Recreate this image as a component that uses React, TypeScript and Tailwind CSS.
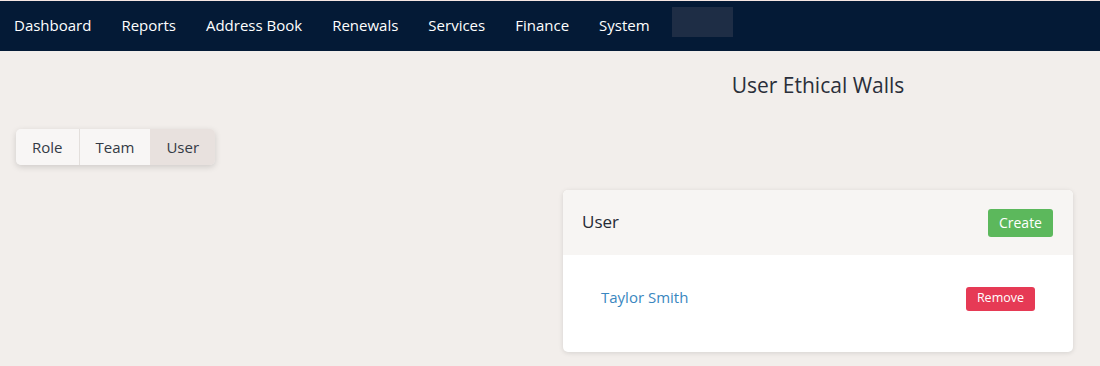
import React from "react";

const navItems = ["Dashboard", "Reports", "Address Book", "Renewals", "Services", "Finance", "System"];

const Navbar = () => (
  <div className="border-t border-[#f6e7e3] bg-[#041a36] h-[51px] flex items-center pl-[14px] pb-[2px]">
    {navItems.map((item) => (
      <a key={item} className="text-white text-[15px] mr-[30px] leading-none cursor-pointer">
        {item}
      </a>
    ))}
    <div className="w-[61px] h-[30px] bg-[#1e2d45] -ml-[8px] -mt-[6px]" />
  </div>
);

const Tabs = () => {
  const tabs = ["Role", "Team", "User"];
  const active = "User";
  return (
    <div className="inline-flex rounded-[5px] shadow-[0_2px_6px_rgba(0,0,0,0.15)] overflow-hidden">
      {tabs.map((t, i) => (
        <div
          key={t}
          className={
            "h-[36px] flex items-center text-[15px] text-[#333a45] " +
            (i === 0 ? "px-[16px] " : "px-[16px] ") +
            (i > 0 && t !== active ? "border-l border-[#e3dfdc] " : "") +
            (t === active ? "bg-[#e8e1de]" : "bg-[#f8f6f5]")
          }
        >
          {t}
        </div>
      ))}
    </div>
  );
};

export default function App() {
  return (
    <div className="w-[1100px] h-[366px] bg-[#f2eeeb] overflow-hidden" style={{ fontFamily: '"Open Sans", sans-serif' }}>
      <Navbar />
      <div className="grid grid-cols-[563px_510px]">
        <div />
        <div className="text-center text-[21px] text-[#2a2f3a] pt-[19px] h-[78px]">User Ethical Walls</div>
        <div className="pl-[16px]">
          <Tabs />
        </div>
        <div />
        <div />
        <div className="mt-[25px] rounded-[5px] bg-white shadow-[0_1px_5px_rgba(0,0,0,0.12)] overflow-hidden">
          <div className="h-[65px] bg-[#f7f5f3] flex items-center justify-between pl-[19px] pr-[20px]">
            <span className="text-[17px] text-[#252a33] -mt-[2px]">User</span>
            <button className="h-[28px] px-[11px] rounded-[3px] bg-[#5cb85c] text-white text-[14px]">Create</button>
          </div>
          <div className="h-[97px] flex items-center justify-between pl-[38px] pr-[38px] pb-[12px]">
            <span className="text-[15px] text-[#3a87c0]">Taylor Smith</span>
            <button className="h-[24px] px-[11px] rounded-[3px] bg-[#e63a55] text-white text-[12.5px] mt-[2px]">Remove</button>
          </div>
        </div>
      </div>
    </div>
  );
}
